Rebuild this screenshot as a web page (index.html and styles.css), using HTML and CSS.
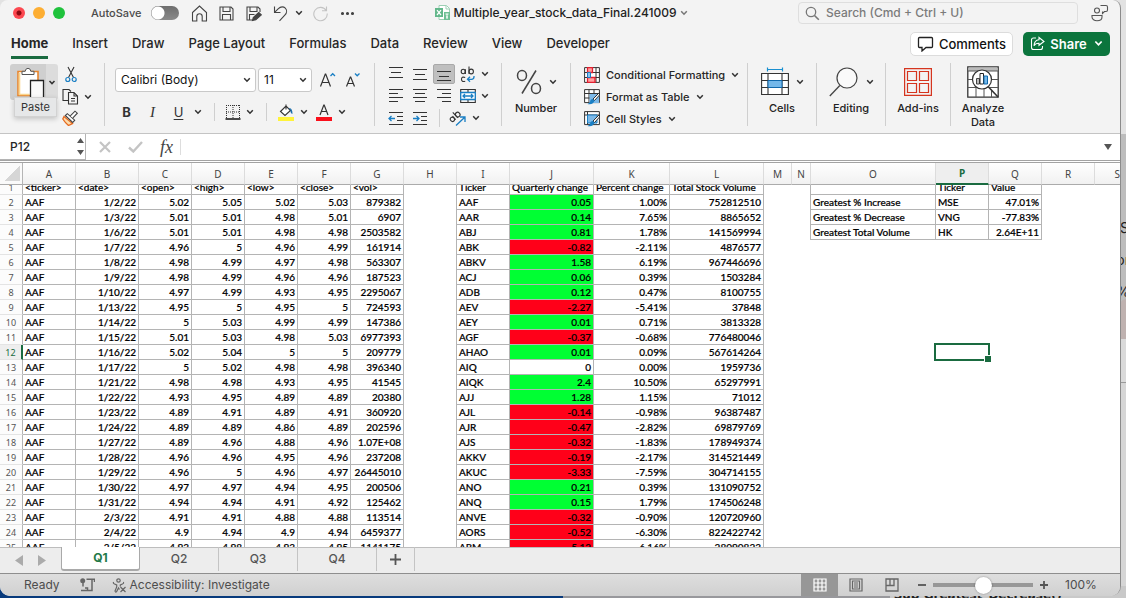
FILE: index.html
```html
<!DOCTYPE html>
<html lang="en">
<head>
<meta charset="utf-8">
<title>Multiple_year_stock_data_Final.241009</title>
<link rel="stylesheet" href="styles.css">
</head>
<body>
<svg class="defs" aria-hidden="true">
  <symbol id="chev" viewBox="0 0 8 6"><path d="M1.2 1.2 4 4.2 6.800 1.200" fill="none" stroke="currentColor" stroke-width="1.500"/></symbol>
</svg>
<div class="desktop" aria-hidden="true">
  <span class="peek peek-s">S</span><span class="peek peek-or">or</span><span class="peek peek-pct">%</span>
  <span class="peek-card"></span>
  <span class="peek-code">Sub Greatest_Decrease()</span>
</div>
<div class="window">
  <header class="titlebar">
    <div class="side">
      <div class="lights">
        <button class="light close" aria-label="Close"></button><button class="light mini" aria-label="Minimize"></button><button class="light full" aria-label="Full screen"></button>
      </div>
      <label class="autosave">AutoSave <input type="checkbox" role="switch"></label>
      <div class="quick">
        <button aria-label="Home"><svg width="17" height="17" viewBox="0 0 17 17"><path d="M1.500 7.500 8.500 1l7 6.500V16h-4.300v-4.500a2.700 2.700 0 0 0-5.400 0V16H1.500z"/></svg></button>
        <button aria-label="Save"><svg width="17" height="17" viewBox="0 0 17 17"><path d="M2 2h11l2 2v11H2zM5 2v4.500h7V2M4.500 15V9.500h8V15"/></svg></button>
        <button aria-label="Save as"><svg width="17" height="17" viewBox="0 0 17 17"><path d="M7 15H2V2h11l2 2v3M5 2v4.500h7V2M4.500 15V9.500h5"/><path d="m7.500 15.500.8-3 5.500-5 2.500 2.300-5.500 5z" class="solid"/></svg></button>
        <button aria-label="Undo"><svg width="17" height="17" viewBox="0 0 17 17"><path d="M2.500 1.500v6h6M2.800 7.200l3.600-3.600c2.400-2.400 5.300-2 6.900-.4s1.900 4.600-.5 7L7.500 15.800"/></svg></button>
        <button class="narrow" aria-label="Undo list"><svg class="chev"><use href="#chev"/></svg></button>
        <button class="faded" aria-label="Redo"><svg width="17" height="17" viewBox="0 0 17 17"><path d="M14.500 1.500v4.300H10M14.200 5.500A6.700 6.700 0 1 0 15.200 8.500"/></svg></button>
        <button class="more" aria-label="More"><svg width="17" height="17" viewBox="0 0 17 17"><g class="solid"><circle cx="3.500" cy="8.500" r="1"/><circle cx="8.500" cy="8.500" r="1"/><circle cx="13.500" cy="8.500" r="1"/></g></svg></button>
      </div>
    </div>
    <button class="docname">
      <svg width="17" height="16" viewBox="0 0 17 16"><path d="M5 .5h7.500l3 3v11H5z" fill="#fff" stroke="#9ccfb4"/><path d="M12 1v3h3" fill="none" stroke="#9ccfb4"/><path d="M1 3h8v9H1z" fill="#62b78a"/><path d="m3 5.200 4 4.800M7 5.200 3 10" stroke="#fff" stroke-width="1.200"/><path d="M10 7h6v8h-6z" fill="#6fc095"/><path d="M11.500 9h3M13 9v5M12 12h2" stroke="#fff"/></svg>
      <span>Multiple_year_stock_data_Final.241009</span>
      <svg class="chev thin"><use href="#chev"/></svg>
    </button>
    <div class="side right">
      <label class="search"><svg width="15" height="15" viewBox="0 0 15 15"><circle cx="6" cy="6" r="4.700" fill="none" stroke="#777" stroke-width="1.300"/><path d="m9.500 9.500 4.300 4.300" stroke="#777" stroke-width="1.600"/></svg><input type="search" aria-label="Search" placeholder="Search (Cmd + Ctrl + U)"></label>
      <button class="person" aria-label="Presence"><svg width="18" height="18" viewBox="0 0 18 18"><circle cx="6" cy="6.500" r="2.500"/><path d="M1 11.500h10v1.500c0 5-10 5-10 0zM9.500 1.500H15q1.500 0 1.500 1.500v3q0 1.500-1.500 1.500h-1.500L11.500 9.500v-2"/></svg></button>
    </div>
  </header>

  <nav class="tabs">
    <a href="#" class="on">Home</a><a href="#">Insert</a><a href="#">Draw</a><a href="#">Page Layout</a><a href="#">Formulas</a><a href="#">Data</a><a href="#">Review</a><a href="#">View</a><a href="#">Developer</a>
    <div class="actions">
      <button class="comments"><svg width="17" height="16" viewBox="0 0 17 16"><path d="M2.500 1.500h12q1 0 1 1v8q0 1-1 1H9l-4 3.500v-3.500H2.500q-1 0-1-1v-8q0-1 1-1z" fill="none" stroke="#222" stroke-width="1.300"/></svg>Comments</button>
      <button class="share"><svg width="15" height="15" viewBox="0 0 15 15"><path d="M6 2H3.500Q1.500 2 1.500 4v7.500q0 2 2 2h7q2 0 2-2V10M9 1.500 14 5.500 9 9.300V7.200Q5.500 7 4 9.800 4.300 4.300 9 3.800z" fill="none" stroke="#fff" stroke-width="1.100"/></svg>Share<svg class="chev big-chev"><use href="#chev"/></svg></button>
    </div>
  </nav>

  <div class="ribbon">
    <section class="group clip">
      <div class="paste">
        <button class="paste-main" aria-label="Paste"><svg width="48" height="36" viewBox="0 0 48 36"><path d="M8 7.500h20v24H8z" fill="#fff" stroke="#e8862e" stroke-width="1.600"/><path d="M9.500 9v21.500h10" fill="none" stroke="#fbd58e" stroke-width="1.600"/><path d="M12 10.500V7.300h3.200q.3-3 2.800-3t2.800 3H24v3.200z" fill="#fff" stroke="#555"/><path d="M20.500 16.500h13V35h-13z" fill="#fafafa" stroke="#222" stroke-width="1.300"/><path d="M39.500 17l2.500 2.600 2.500-2.600" fill="none" stroke="#333" stroke-width="1.500"/></svg></button>
        <span class="tip">Paste</span>
      </div>
      <div class="clip-tools">
        <button aria-label="Cut"><svg width="12" height="17" viewBox="0 0 12 17"><path d="m3 1 5.500 10.500M9 1 3.500 11.500" fill="none" stroke="#333" stroke-width="1.100"/><circle cx="2.800" cy="13.500" r="2" fill="none" stroke="#1a7fc4" stroke-width="1.200"/><circle cx="9.200" cy="13.500" r="2" fill="none" stroke="#1a7fc4" stroke-width="1.200"/></svg></button>
        <div class="pair"><button aria-label="Copy"><svg width="17" height="17" viewBox="0 0 17 17"><path d="M6 12.500H1V1.500h6l2 2M6.500 4.500h5.500l3.500 3.500v8h-9zM12 4.500V8h3.500" fill="none" stroke="#333" stroke-width="1.100"/><path d="M9 10.500h4M9 13h4" stroke="#333"/></svg></button><svg class="chev"><use href="#chev"/></svg></div>
        <button aria-label="Format painter"><svg width="17" height="16" viewBox="0 0 17 16"><path d="m2 6.500 8.500 7-4 2Q3 12.500.8 9z" fill="#fbdcae" stroke="#e66a1f" stroke-width="1.300"/><path d="m3.300 5.500 7.400 7 2-2.300L5.300 3.700z" fill="#fff" stroke="#444" stroke-width="1.100"/><path d="m8.300 5.800 4.700-4.600 2.300 2-4.600 4.900" fill="#fff" stroke="#444" stroke-width="1.100"/></svg></button>
      </div>
    </section>

    <section class="group font">
      <div class="row combos">
        <button class="combo family">Calibri (Body)<svg class="chev"><use href="#chev"/></svg></button>
        <button class="combo size">11<svg class="chev"><use href="#chev"/></svg></button>
        <button class="grow" aria-label="Increase font size"><svg width="18" height="18" viewBox="0 0 18 18"><path d="M1.500 15.500 6.300 3h.4l4.800 12.500M3.200 11.500h6.600" fill="none" stroke="#333" stroke-width="1.200"/><path d="m11.500 5 2.200-2.300L16 5" fill="none" stroke="#1a7fc4" stroke-width="1.300"/></svg></button>
        <button class="grow" aria-label="Decrease font size"><svg width="18" height="18" viewBox="0 0 18 18"><path d="M2.500 15.500 6.300 6h.4l3.800 9.500M3.800 12.500h5.400" fill="none" stroke="#333" stroke-width="1.200"/><path d="m11 2.500 2.200 2.300L15.500 2.500" fill="none" stroke="#1a7fc4" stroke-width="1.300"/></svg></button>
      </div>
      <div class="row styles">
        <button class="fmt b">B</button><button class="fmt i">I</button><button class="fmt u">U</button><svg class="chev"><use href="#chev"/></svg>
        <i class="bar"></i>
        <button aria-label="Borders"><svg width="16" height="16" viewBox="0 0 16 16"><path d="M1 1.500h14M1 8h14M1.500 1v13M8 1v13M14.500 1v13" stroke="#333" stroke-dasharray="1 1"/><path d="M.5 15h15" stroke="#111" stroke-width="1.400"/></svg></button><svg class="chev"><use href="#chev"/></svg>
        <i class="bar"></i>
        <button aria-label="Fill color"><svg width="18" height="18" viewBox="0 0 18 18"><path d="M9 1.500v5M3.500 8.500 9 3l4.500 4.500L8 12.500z" fill="#fff" stroke="#333" stroke-width="1.100"/><path d="M11.500 5.500q4-1 4 5.500-2.500-1-2-4" fill="#1a6fae"/><path d="M1 14h16v4H1z" fill="#fff33a"/></svg></button><svg class="chev"><use href="#chev"/></svg>
        <button aria-label="Font color"><svg width="18" height="18" viewBox="0 0 18 18"><path d="M5 12 8.800 2h.4L13 12M6.500 8.500h5" fill="none" stroke="#333" stroke-width="1.200"/><path d="M1 14h16v4H1z" fill="#fa0f1b"/></svg></button><svg class="chev"><use href="#chev"/></svg>
      </div>
    </section>

    <section class="group align">
      <button aria-label="Top align"><svg width="16" height="16" viewBox="0 0 16 16"><path d="M1 1.500h14M3 6.500h10M1 11.500h14"/></svg></button>
      <button aria-label="Middle align"><svg width="16" height="16" viewBox="0 0 16 16"><path d="M1 3.500h14M3 8.500h10M1 13.500h14"/></svg></button>
      <button aria-label="Bottom align" class="pressed"><svg width="16" height="16" viewBox="0 0 16 16"><path d="M1 5.500h14M3 10.500h10M1 14.500h14"/></svg></button>
      <div class="pair"><button aria-label="Wrap text"><svg width="16" height="17" viewBox="0 0 16 17"><ellipse cx="3.200" cy="5.500" rx="2" ry="2.200"/><path d="M5.400 3.200v4.800M9 .5V8"/><ellipse cx="11.200" cy="5.500" rx="2.200" ry="2.400"/><path d="M5.200 11.500q-3.700-1.200-3.700 1.800t3.700 1.900"/><path class="blue" d="M14 10v.8q0 2.500-2.500 2.500H7.500M10 10.800l-2.500 2.500 2.500 2.500"/></svg></button><svg class="chev"><use href="#chev"/></svg></div>
      <button aria-label="Align left"><svg width="16" height="16" viewBox="0 0 16 16"><path d="M1 1.500h14M1 5.500h9M1 9.500h14M1 13.500h9"/></svg></button>
      <button aria-label="Center"><svg width="16" height="16" viewBox="0 0 16 16"><path d="M1 1.500h14M3 5.500h10M1 9.500h14M3 13.500h10"/></svg></button>
      <button aria-label="Align right"><svg width="16" height="16" viewBox="0 0 16 16"><path d="M1 1.500h14M6 5.500h9M1 9.500h14M6 13.500h9"/></svg></button>
      <div class="pair"><button aria-label="Merge"><svg width="16" height="16" viewBox="0 0 16 16"><path d="M.7 1.500h14.600v13H.7zM8 1.500v3M8 11.500v3"/><path d="M.7 4.500h14.600v7H.7z" fill="#fff" class="blue"/><path class="blue" d="M3 8h10M5 6 3 8l2 2M11 6l2 2-2 2"/></svg></button><svg class="chev"><use href="#chev"/></svg></div>
      <button aria-label="Decrease indent"><svg width="16" height="16" viewBox="0 0 16 16"><path d="M1 2.500h14M9 6.500h6M9 10.500h6M1 14.500h14"/><path class="blue" d="M1 8.500h6M3.500 6 1 8.500 3.500 11"/></svg></button>
      <button aria-label="Increase indent"><svg width="16" height="16" viewBox="0 0 16 16"><path d="M1 2.500h14M9 6.500h6M9 10.500h6M1 14.500h14"/><path class="blue" d="M1 8.500h6M4.500 6 7 8.500 4.500 11"/></svg></button>
      <div class="orient"><i class="bar"></i><button aria-label="Orientation"><svg width="18" height="17" viewBox="0 0 18 17"><g transform="rotate(-42 6 7)"><ellipse cx="2.500" cy="7" rx="2" ry="2.200"/><path d="M4.700 4.700v4.800M7.500 2v7.500"/><ellipse cx="9.700" cy="7" rx="2.200" ry="2.400"/></g><path class="blue" d="m7 15.500 8.500-8M11 7h5v5"/></svg></button><svg class="chev"><use href="#chev"/></svg></div>
    </section>

    <section class="group number">
      <button class="big"><span class="art"><svg width="26" height="28" viewBox="0 0 26 28"><g fill="none" stroke="#444" stroke-width="1.500"><ellipse cx="6" cy="7.500" rx="4.500" ry="5"/><ellipse cx="20" cy="20.500" rx="4.500" ry="5"/><path d="M20 2.500 6 25.500"/></g></svg><svg class="chev"><use href="#chev"/></svg></span>Number</button>
    </section>

    <section class="group cond">
      <button><svg width="16" height="16" viewBox="0 0 16 16"><path d="M.6.600h14.800v14.800H.6zM.6 5.500h14.800M.6 10.500h14.800M5 .6v14.800M12 .6v14.800" fill="#fff" stroke="#333"/><path d="M3.500.6h5v4.900h-5zM3.500 10.500H11v4.900H3.500z" fill="#ffa0a0" stroke="#e01f2f" stroke-width="1.300"/><path d="M3.500 5.500h3v5h-3z" fill="#8cc3f0" stroke="#1a7fc4"/></svg>Conditional Formatting<svg class="chev"><use href="#chev"/></svg></button>
      <button><svg width="16" height="16" viewBox="0 0 16 16"><path d="M.6.600h14.800v13H.6zM.6 4.500h14.800M.6 9h14.800M5 .6v13M10 .6v13" fill="#fff" stroke="#333"/><path d="M5.500 5H15v9H5.500z" fill="#7db9e8"/><path d="M15.500 3.500 9 10l1.500 1.500 5-5.500z" fill="#fff" stroke="#333"/><path d="M9 10q-3 0-3 3.500L3.500 15q6 1 7-3.500z" fill="#1a7fc4"/></svg>Format as Table<svg class="chev"><use href="#chev"/></svg></button>
      <button><svg width="16" height="16" viewBox="0 0 16 16"><path d="M.6.600h14.800v13H.6zM.6 4h14.800M3.500.6v13" fill="#fff" stroke="#333"/><path d="M3.500 4H13v8H3.500z" fill="#7db9e8" stroke="#1a7fc4"/><path d="M15.500 3.500 9 10l1.500 1.500 5-5.500z" fill="#fff" stroke="#333"/><path d="M9 10q-3 0-3 3.500L3.500 15q6 1 7-3.500z" fill="#1a7fc4"/></svg>Cell Styles<svg class="chev"><use href="#chev"/></svg></button>
    </section>

    <section class="group cells">
      <button class="big"><span class="art"><svg width="28" height="30" viewBox="0 0 28 30"><path d="M6.500 2.500h15M6.500.5v4M21.500.5v4" stroke="#1a8fcf" fill="none" stroke-width="1.200"/><path d="M.6 6.500h26.800v21H.6zM.6 13.500h26.800M.6 20.500h26.800M7 6.500v21M21 6.500v21" fill="#fff" stroke="#333" stroke-width="1.100"/><path d="M7 13.500h14v7H7z" fill="#74b8ea" stroke="#1068ac"/></svg><svg class="chev"><use href="#chev"/></svg></span>Cells</button>
    </section>
    <section class="group editing">
      <button class="big"><span class="art"><svg width="30" height="30" viewBox="0 0 30 30"><circle cx="18" cy="11" r="10" fill="#fafafa" stroke="#444" stroke-width="1.200"/><path d="M10.800 18.500.8 29" stroke="#444" stroke-width="1.300"/></svg><svg class="chev"><use href="#chev"/></svg></span>Editing</button>
    </section>
    <section class="group addins">
      <button class="big"><span class="art"><svg width="28" height="28" viewBox="0 0 28 28"><g fill="none" stroke="#d5351f" stroke-width="1.200"><path d="M.6.600h26.800v26.800H.6zM3.500 3.500h9v9h-9zM15.500 3.500h9v9h-9zM3.500 15.500h9v9h-9zM15.500 15.500h9v9h-9z"/></g></svg></span>Add-ins</button>
    </section>
    <section class="group analyze">
      <button class="big"><span class="art"><svg width="32" height="32" viewBox="0 0 32 32"><path d="M.8.800h30.400v30.400H.8z" fill="#fff" stroke="#333" stroke-width="1.300"/><path d="M1.500 1.500h29v3.500h-29z" fill="#bbb"/><path d="M1 5h30M1 13.500h30M1 21.500h30M9 21.500V31M17 21.500V31M24.500 24v7" stroke="#555"/><path d="m22 21.500 9 9.500" stroke="#333" stroke-width="1.600"/><circle cx="15" cy="13.500" r="9.500" fill="#fff" stroke="#333" stroke-width="1.200"/><path d="M9.500 12.500h3v5.500h-3z" fill="#bbb" stroke="#444"/><path d="M13 7.500h3.500V18H13z" fill="#fff" stroke="#222"/><path d="M17 10h3.500v8H17z" fill="#74b8ea" stroke="#1068ac"/></svg></span>Analyze<br>Data</button>
    </section>
  </div>

  <div class="formula">
    <div class="namebox"><input value="P12" aria-label="Name box"><svg width="7" height="20" viewBox="0 0 7 20"><path d="M0 6h7L3.500 1zM0 13h7l-3.500 5z" fill="#555"/></svg></div>
    <button aria-label="Cancel"><svg width="12" height="12" viewBox="0 0 12 12"><path d="m1 1 10 10M11 1 1 11" stroke="#c4c4c4" stroke-width="2.200"/></svg></button>
    <button aria-label="Enter"><svg width="15" height="12" viewBox="0 0 15 12"><path d="m1 6.500 4.300 4L14 1" fill="none" stroke="#c4c4c4" stroke-width="2.400"/></svg></button>
    <button class="fx" aria-label="Insert function">fx</button>
    <input class="entry" aria-label="Formula">
    <svg class="expand" width="8" height="6" viewBox="0 0 8 6"><path d="M0 0h8L4 6z" fill="#555"/></svg>
  </div>

  <main class="sheet">
    <table class="grid heads"></table>
    <div class="scroller"><table class="grid body"></table></div>
  </main>

  <footer class="sheettabs">
    <button class="arrow" aria-label="Previous sheet"><svg width="8" height="11" viewBox="0 0 8 11"><path d="M8 0v11L0 5.500z" fill="#ababab"/></svg></button>
    <button class="arrow" aria-label="Next sheet"><svg width="8" height="11" viewBox="0 0 8 11"><path d="M0 0v11l8-5.500z" fill="#ababab"/></svg></button>
    <button class="stab on">Q1</button><button class="stab">Q2</button><button class="stab">Q3</button><button class="stab">Q4</button>
    <button class="add" aria-label="Add sheet"><svg width="11" height="11" viewBox="0 0 11 11"><path d="M5.500 0v11M0 5.500h11" stroke="#555" stroke-width="1.800"/></svg></button>
  </footer>

  <footer class="status">
    <span class="ready">Ready</span>
    <svg width="15" height="14" viewBox="0 0 15 14"><circle cx="2.700" cy="2.700" r="2.500" fill="#666"/><path d="M6.500 1.300H14.500V4M12 1.300v11.200H7.500M3 5v3.500M1 12.500h6.500V10H5" fill="none" stroke="#666" stroke-width="1.500"/></svg>
    <button class="access"><svg width="15" height="15" viewBox="0 0 15 15"><g fill="none" stroke="#666" stroke-width="1.200"><circle cx="6.500" cy="2.500" r="1.700"/><path d="M1.500 4q-.5 1.500 1 2L4.700 7v2L3 13q.3 1.500 1.500.8L6.500 10l1 1.500M11.500 4q.5 1.500-1 2L8.300 7v1.500M8.500 9l5 5M13.500 9l-5 5"/></g></svg>Accessibility: Investigate</button>
    <div class="views">
      <button class="on" aria-label="Normal view"><svg width="14" height="14" viewBox="0 0 14 14"><path d="M1 1h12v12H1zM1 5h12M1 9h12M5 1v12M9 1v12" fill="none" stroke="#fff" stroke-width="1.200"/></svg></button>
      <button aria-label="Page layout view"><svg width="14" height="14" viewBox="0 0 14 14"><path d="M1 1h12v12H1zM3.500 3h7v8h-7zM5 5h4M5 7h4M5 9h4" fill="none" stroke="#666" stroke-width="1.200"/></svg></button>
      <button aria-label="Page break view"><svg width="14" height="14" viewBox="0 0 14 14"><path d="M1 1h12v12H1zM1 7.500h8V1M5 1v6.500" fill="none" stroke="#666" stroke-width="1.300"/></svg></button>
    </div>
    <button class="zoomb" aria-label="Zoom out"><svg width="8" height="8" viewBox="0 0 8 8"><path d="M0 4h8" stroke="#555" stroke-width="1.800"/></svg></button>
    <input type="range" class="zoom" aria-label="Zoom" min="0" max="100" value="50">
    <button class="zoomb" aria-label="Zoom in"><svg width="8" height="8" viewBox="0 0 8 8"><path d="M0 4h8M4 0v8" stroke="#555" stroke-width="1.800"/></svg></button>
    <span class="pct">100%</span>
  </footer>
</div>
<script src="script.js"></script>
</body>
</html>
```
FILE: styles.css
```css
* { box-sizing: border-box; }
html, body { height: 100%; }
body {
  margin: 0; overflow: hidden; position: relative;
  font: 500 11px/14px Inter, "Liberation Sans", sans-serif; color: #262626;
  background: #c6c6c6;
}
button, input { font: inherit; color: inherit; border: 0; background: none; padding: 0; margin: 0; outline: 0; }
button { display: inline-flex; align-items: center; justify-content: center; flex: none; }
svg { display: block; flex: none; }
.defs { position: absolute; width: 0; height: 0; }
.chev { width: 8px; height: 6px; color: #333; }
.chev.thin { color: #777; }
.bar { width: 1px; height: 18px; background: #cfcfcf; }
.row, .pair { display: flex; align-items: center; }

/* desktop behind the window */
.desktop {
  position: absolute; inset: 0; overflow: hidden;
  background:
    linear-gradient(90deg, #083a7c 0 50%, #98989c 50% 79%, #c9c9c9 79%) bottom / 100% 12px no-repeat,
    linear-gradient(#e2e2e2 0 134px, #bdbdbd 134px 300px, #d6d6d6 340px);
}
.peek { position: absolute; font-size: 14px; font-weight: 400; color: #222; }
.peek-s { top: 221px; right: -3px; }
.peek-or { top: 253px; right: -4px; }
.peek-pct { top: 285px; right: -4px; }
.peek-card { position: absolute; top: 299px; right: -10px; width: 16px; height: 84px; border-radius: 6px 0 0; border-bottom: 1px solid #9a9a9a; background: linear-gradient(#bfb2b0 40px, #dadada 40px); }
.peek-code { position: absolute; right: 64px; bottom: -4px; font: 700 12px/14px "DejaVu Sans", sans-serif; color: #222; }

.window {
  position: relative; display: flex; flex-direction: column;
  height: calc(100% - 2px); margin-right: 5px; overflow: hidden;
  background: #f3f3f3; border-right: 1px solid #8b8b8b; border-radius: 8px 8px 10px 10px;
}

/* title bar */
.titlebar { display: flex; align-items: center; height: 26px; padding: 0 11px 0 13px; }
.side { display: flex; align-items: center; flex: 1 1 0; }
.lights { display: flex; gap: 8px; }
.light { width: 12px; height: 12px; border-radius: 50%; }
.close { background: radial-gradient(circle, #8c0a10 2px, #fc4850 3px); }
.mini { background: #fdae33; }
.full { background: #1fc23c; }
.autosave { display: flex; align-items: center; gap: 10px; margin-left: 26px; color: #4b4b4b; }
.autosave input { appearance: none; width: 28px; height: 14px; margin: 0; border-radius: 7px; background: radial-gradient(circle at 7px 7px, #fff 6px, transparent 7px), linear-gradient(#6d6d6d, #8a8a8a); }
.quick { display: flex; margin-left: 7px; color: #444; }
.quick button { width: 27px; height: 20px; }
.quick .narrow { width: 10px; }
.quick .faded { width: 32px; color: #c3c3c3; }
.quick .more { width: 23px; }
.quick svg:not(.chev), .person svg { fill: none; stroke: currentColor; stroke-width: 1.1; }
.quick .solid { fill: currentColor; }
.docname { gap: 2px; font-size: 12px; color: #222; }
.docname .chev { margin-left: 1px; }
.right { justify-content: flex-end; }
.search { display: flex; align-items: center; gap: 6px; width: 280px; height: 22px; padding-left: 6px; border: 1px solid #dedede; border-radius: 4px; }
.search input { flex: 1; min-width: 0; font-size: 12px; appearance: none; }
.search input::placeholder { color: #7b7b7b; opacity: 1; }
.person { width: 18px; margin-left: 13px; color: #555; }

/* ribbon tabs */
.tabs { display: flex; align-items: center; gap: 24px; height: 35px; padding: 0 10px 0 11px; font-size: 13px; }
.tabs a { color: #262626; text-decoration: none; padding: 7px 0 5px; line-height: 16px; border-bottom: 3px solid transparent; }
.tabs a.on { font-weight: 700; border-color: #1a6b40; }
.actions { display: flex; gap: 10px; margin-left: auto; }
.actions button { height: 24px; border-radius: 5px; gap: 5px; }
.comments { width: 103px; background: #fff; border: 1px solid #dcdcdc; color: #111; }
.actions .share { width: 87px; background: #0b753d; color: #fff; font-weight: 600; }
.big-chev { color: #fff; margin-left: 2px; width: 9px; height: 7px; }

/* ribbon */
.ribbon { display: flex; height: 73px; padding: 2px 0 7px; border-bottom: 1px solid #c4c4c4; }
.group { display: flex; border-right: 1px solid #cfcfcf; flex: none; }
.group:last-child { border: 0; }
.clip { width: 105px; padding-left: 10px; gap: 4px; }
.paste { position: relative; width: 48px; padding-top: 1px; }
.paste-main { width: 48px; height: 36px; border-radius: 3px; background: linear-gradient(90deg, #cfcfcf 36px, #dcdcdc 36px); }
.tip { position: absolute; left: 4px; top: 34px; width: 43px; height: 20px; line-height: 18px; text-align: center; background: #e6e7e8; border: 1px solid #d2d2d2; box-shadow: 0 2px 5px #0003; font-weight: 400; color: #333; }
.clip-tools { display: flex; flex-direction: column; align-items: flex-start; justify-content: space-between; padding-top: 3px; }
.clip-tools > button:first-child { margin-left: 3px; }
.clip-tools .pair { gap: 5px; }
.font { width: 270px; padding: 5px 0 0 10px; flex-direction: column; gap: 7px; }
.combos { gap: 2px; }
.combo { height: 24px; justify-content: space-between; padding: 0 4px 0 5px; background: #fff; border: 1px solid #c9c9c9; border-radius: 3px; font-size: 12px; font-weight: 400; color: #111; }
.family { width: 141px; }
.size { width: 54px; }
.grow { width: 18px; margin-left: 5px; }
.styles { height: 26px; gap: 5px; padding-left: 1px; }
.styles .fmt { width: 21px; font-size: 13px; font-weight: 400; color: #333; }
.styles .fmt.b { font-weight: 700; }
.styles .fmt.i { font-family: "Liberation Serif", serif; font-style: italic; font-size: 15px; }
.styles .fmt.u { text-decoration: underline; text-underline-offset: 2px; }
.styles > .bar { margin: 0 5px; }
.styles > .chev { margin-right: 2px; }
.align { display: grid; grid-template-columns: 24px 24px 24px 1fr; grid-template-rows: 22px 22px 22px; width: 127px; padding: 0 6px 0 9px; place-items: center; }
.align svg:not(.chev) { fill: none; stroke: #333; stroke-width: 1.1; }
.align svg .blue { stroke: #1a7fc4; stroke-width: 1.3; }
.align .pair { gap: 5px; justify-self: start; padding-left: 4px; }
.pressed { width: 22px; height: 20px; background: #bfbfbf; border: 1px solid #a9a9a9; border-radius: 2px; }
.orient { grid-column: 3 / 5; display: flex; align-items: center; gap: 5px; justify-self: start; padding-left: 7px; }
.orient button { margin-left: 4px; }
.big { flex-direction: column; justify-content: flex-start; width: 100%; color: #222; }
.art { display: flex; align-items: center; justify-content: center; gap: 7px; height: 32px; margin: 3px 0; }
.number, .cells, .editing { width: 69px; }
.addins { width: 65px; }
.analyze { width: 64px; }
.cond { width: 177px; flex-direction: column; align-items: flex-start; gap: 2px; padding: 2px 0 0 13px; }
.cond button { gap: 6px; height: 20px; }

/* formula bar */
.formula { display: flex; align-items: center; height: 29px; background: #fff; border-bottom: 3px double #a3a3a3; padding-right: 8px; font-size: 12px; }
.namebox { display: flex; align-items: center; width: 86px; height: 26px; padding: 0 1px 0 10px; border: 1px solid #b4b4b4; border-left: 0; border-top: 0; margin-right: 13px; }
.namebox input { flex: 1; min-width: 0; }
.formula button { margin-right: 17px; }
.formula .fx { font: italic 18px/20px "Liberation Serif", serif; color: #444; margin-right: 7px; }
.entry { flex: 1; min-width: 0; height: 16px; border-left: 1px solid #ddd; }

/* sheet */
.sheet { flex: 1 1 0; min-height: 0; display: flex; flex-direction: column; overflow: hidden; background: #fff; }
.scroller { flex: 1; min-height: 0; overflow: hidden; }
.grid { table-layout: fixed; width: 100%; border-collapse: separate; border-spacing: 0; flex: none; }
.grid th, .grid td { padding: 0; white-space: nowrap; overflow: hidden; }
.heads th { height: 22px; border-right: 1px solid #dcdcdc; border-bottom: 1px solid #ababab; font: 400 10px/14px "Noto Sans", sans-serif; color: #444; background: linear-gradient(#fff, #f1f1f1); }
.heads th:last-child { text-align: right; border-right: 0; }
.heads .corner { background: linear-gradient(135deg, transparent 50%, #d6d6d6 50%) 5px 3px / 15px 15px no-repeat, #fafafa; border-right: 1px solid #b5b5b5; }
.heads .on { color: #1a6b40; font-weight: 700; background: #eee; border-bottom: 2px solid #1a6b40; }
.body { margin-top: -5px; font: 500 10px/13px Lato, sans-serif; color: #000; -webkit-text-stroke: .2px #000; }
.body td, .body th { height: 15px; line-height: 13px; }
.body th { font-family: "Noto Sans", sans-serif; font-weight: 400; font-size: 9px; color: #555; -webkit-text-stroke: 0; background: #fcfcfc; border-right: 1px solid #b5b5b5; border-bottom: 1px solid #e4e4e4; }
.body th.on { color: #1a6b40; border-right: 2px solid #1a6b40; background: #eee; }
.body td.c { border-right: 1px solid #b4b4b4; border-bottom: 1px solid #b4b4b4; padding: 0 2px; text-align: right; }
.body td.l { text-align: left; }
.body td.edge { border-right: 1px solid #b4b4b4; }
.body td.up { background: #00ff33; }
.body td.down { background: #ff0019; }
.body td.cursor { position: relative; overflow: visible; }
.cursor::before { content: ""; position: absolute; inset: -2px -1px -1px -2px; border: 2px solid #1a6b40; }
.cursor::after { content: ""; position: absolute; right: -2px; bottom: -2px; width: 6px; height: 6px; background: #1a6b40; border: 1px solid #fff; border-width: 1px 0 0 1px; }

/* sheet tabs */
.sheettabs { display: flex; height: 27px; flex: none; padding-left: 7px; background: #ededed; border-bottom: 1px solid #8e8e8e; box-shadow: inset 0 1px #bdbdbd; color: #555; }
.arrow { width: 23px; }
.stab { width: 79px; height: 24px; font-size: 12px; border-right: 1px solid #c4c4c4; }
.arrow + .stab { margin-left: 8px; }
.stab.on { background: #fff; color: #1f7a48; font-weight: 700; border: 1px solid #a9a9a9; border-width: 0 1px 2px; border-radius: 0 0 3px 3px; }
.add { width: 38px; height: 24px; border-right: 1px solid #c4c4c4; }

/* status bar */
.status { display: flex; align-items: center; height: 22px; flex: none; padding: 0 23px 0 24px; background: linear-gradient(#dedede, #d0d0d0); font-size: 12px; font-weight: 400; color: #4d4d4d; }
.ready { margin-right: 20px; }
.access { gap: 3px; margin-left: 17px; }
.views { display: flex; margin: 0 8px 0 auto; align-self: stretch; }
.views button { width: 36px; }
.views .on { background: #979797; width: 37px; }
.zoom { appearance: none; width: 100px; height: 17px; margin: 0 7px; background: linear-gradient(#979797, #979797) center / 100% 4px no-repeat; border-radius: 2px; }
.zoom::-webkit-slider-thumb { appearance: none; width: 17px; height: 17px; border-radius: 50%; background: #fff; box-shadow: 0 0 2px #0006; }
.pct { width: 32px; margin-left: 17px; }
```
FILE: script.js
```js
const widths = [23, 53, 63, 53, 53, 53, 53, 53, 53, 53, 84, 76, 94, 28, 19, 125, 53, 53, 53, 0];
const letters = "ABCDEFGHIJKLMNOPQRS".split("");

const daily = `<ticker> <date> <open> <high> <low> <close> <vol>
AAF 1/2/22 5.02 5.05 5.02 5.03 879382
AAF 1/3/22 5.01 5.01 4.98 5.01 6907
AAF 1/6/22 5.01 5.01 4.98 4.98 2503582
AAF 1/7/22 4.96 5 4.96 4.99 161914
AAF 1/8/22 4.98 4.99 4.97 4.98 563307
AAF 1/9/22 4.98 4.99 4.96 4.96 187523
AAF 1/10/22 4.97 4.99 4.93 4.95 2295067
AAF 1/13/22 4.95 5 4.95 5 724593
AAF 1/14/22 5 5.03 4.99 4.99 147386
AAF 1/15/22 5.01 5.03 4.98 5.03 6977393
AAF 1/16/22 5.02 5.04 5 5 209779
AAF 1/17/22 5 5.02 4.98 4.98 396340
AAF 1/21/22 4.98 4.98 4.93 4.95 41545
AAF 1/22/22 4.93 4.95 4.89 4.89 20380
AAF 1/23/22 4.89 4.91 4.89 4.91 360920
AAF 1/24/22 4.89 4.89 4.86 4.89 202596
AAF 1/27/22 4.89 4.96 4.88 4.96 1.07E+08
AAF 1/28/22 4.96 4.96 4.95 4.96 237208
AAF 1/29/22 4.96 5 4.96 4.97 26445010
AAF 1/30/22 4.97 4.97 4.94 4.95 200506
AAF 1/31/22 4.94 4.94 4.91 4.92 125462
AAF 2/3/22 4.91 4.91 4.88 4.88 113514
AAF 2/4/22 4.9 4.94 4.9 4.94 6459377
AAF 2/5/22 4.93 4.98 4.93 4.95 1141175`.split("\n").map(r => r.split(" "));

const summary = `Ticker|Quarterly change|Percent change|Total Stock Volume
AAF|0.05|1.00%|752812510
AAR|0.14|7.65%|8865652
ABJ|0.81|1.78%|141569994
ABK|-0.82|-2.11%|4876577
ABKV|1.58|6.19%|967446696
ACJ|0.06|0.39%|1503284
ADB|0.12|0.47%|8100755
AEV|-2.27|-5.41%|37848
AEY|0.01|0.71%|3813328
AGF|-0.37|-0.68%|776480046
AHAO|0.01|0.09%|567614264
AIQ|0|0.00%|1959736
AIQK|2.4|10.50%|65297991
AJJ|1.28|1.15%|71012
AJL|-0.14|-0.98%|96387487
AJR|-0.47|-2.82%|69879769
AJS|-0.32|-1.83%|178949374
AKKV|-0.19|-2.17%|314521449
AKUC|-3.33|-7.59%|304714155
ANO|0.21|0.39%|131090752
ANQ|0.15|1.79%|174506248
ANVE|-0.32|-0.90%|120720960
AORS|-0.52|-6.30%|822422742
ARM|-5.12|-6.16%|28090823`.split("\n").map(r => r.split("|"));

const greatest = [
  ["", "Ticker", "Value"],
  ["Greatest % Increase", "MSE", "47.01%"],
  ["Greatest % Decrease", "VNG", "-77.83%"],
  ["Greatest Total Volume", "HK", "2.64E+11"],
];

const el = (tag, text = "", cls = "") => {
  const node = document.createElement(tag);
  node.textContent = text;
  if (cls) node.className = cls;
  return node;
};

const columns = () => {
  const group = el("colgroup");
  widths.forEach(w => {
    const col = el("col");
    if (w) col.style.width = w + "px";
    group.append(col);
  });
  return group;
};

const cells = (row, values, header, leftColumns, colored) =>
  values.forEach((v, i) => {
    let cls = "c";
    if (header || leftColumns.includes(i)) cls += " l";
    if (colored && i === 1 && !header && Number(v)) cls += Number(v) > 0 ? " up" : " down";
    row.append(el("td", v, cls));
  });

const blank = (row, cls = "") => row.append(el("td", "", cls));

const heads = document.querySelector(".heads");
const headRow = el("tr");
headRow.append(el("th", "", "corner"));
letters.forEach(l => headRow.append(el("th", l, l === "P" ? "on" : "")));
heads.append(columns(), headRow);

const body = document.querySelector(".body");
body.append(columns());
daily.forEach((values, r) => {
  const row = el("tr");
  row.append(el("th", r + 1, r === 11 ? "on" : ""));
  cells(row, values, r === 0, [0], false);
  blank(row, "edge");
  cells(row, summary[r], r === 0, [0], true);
  blank(row);
  blank(row, greatest[r] ? "edge" : "");
  if (greatest[r]) cells(row, greatest[r], r === 0, [0, 1], false);
  else {
    blank(row);
    blank(row, r === 11 ? "cursor" : "");
    blank(row);
  }
  blank(row);
  blank(row);
  body.append(row);
});
```
